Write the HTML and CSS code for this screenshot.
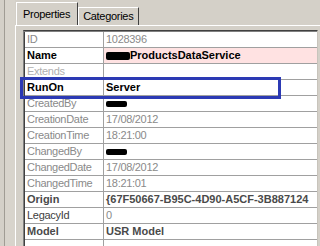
FILE: index.html
```html
<!DOCTYPE html>
<html lang="en">
<head>
    <meta charset="UTF-8">
    <title>Properties</title>
    <link rel="stylesheet" href="styles.css">
</head>
<body>
    <div class="window">
        <div class="side"></div>
        <div class="main">
            <div class="tabs">
                <div class="tab active">Properties</div>
                <div class="tab">Categories</div>
            </div>
            <div class="panel">
                <div class="grid">
                    <div class="row"><div class="key dim">ID</div><div class="val dim">1028396</div></div>
                    <div class="row"><div class="key bold">Name</div><div class="val bold pink"><span class="blob"></span>ProductsDataService</div></div>
                    <div class="row"><div class="key dim faint">Extends</div><div class="val"></div></div>
                    <div class="row run">
                        <div class="key bold">RunOn</div><div class="val bold">Server</div>
                        <div class="mark"></div>
                    </div>
                    <div class="row"><div class="key dim">CreatedBy</div><div class="val"><span class="blob short"></span></div></div>
                    <div class="row"><div class="key dim">CreationDate</div><div class="val dim">17/08/2012</div></div>
                    <div class="row"><div class="key dim">CreationTime</div><div class="val dim">18:21:00</div></div>
                    <div class="row"><div class="key dim">ChangedBy</div><div class="val"><span class="blob short"></span></div></div>
                    <div class="row"><div class="key dim">ChangedDate</div><div class="val dim">17/08/2012</div></div>
                    <div class="row"><div class="key dim">ChangedTime</div><div class="val dim">18:21:01</div></div>
                    <div class="row"><div class="key bold grey">Origin</div><div class="val bold grey">{67F50667-B95C-4D90-A5CF-3B887124</div></div>
                    <div class="row"><div class="key grey">LegacyId</div><div class="val dim">0</div></div>
                    <div class="row"><div class="key bold grey">Model</div><div class="val bold grey">USR Model</div></div>
                    <div class="row"><div class="key"></div><div class="val"></div></div>
                </div>
            </div>
        </div>
    </div>
</body>
</html>
```

FILE: styles.css
```css
body {
    margin: 0;
    font-family: "Liberation Sans", Arial, sans-serif;
    font-size: 11px;
    letter-spacing: -0.3px;
    background: #d4d0c8;
}
.window {
    display: flex;
    width: 320px;
    height: 246px;
    overflow: hidden;
    background: #d4d0c8;
}
.side {
    width: 10px;
    margin-left: 4px;
    border-left: 1px solid #a09c94;
    background: #d8d4cc;
}
.main {
    flex: 1;
    display: flex;
    flex-direction: column;
    min-height: 0;
}
.tabs {
    flex: none;
    display: flex;
    align-items: flex-end;
    height: 25px;
}
.tab {
    height: 18px;
    line-height: 17px;
    padding: 0 5px 0 4px;
    border-top: 1px solid #ffffff;
    border-left: 1px solid #ffffff;
    border-right: 1px solid #404040;
    color: #000000;
    box-sizing: border-box;
}
.tab.active {
    height: 23px;
    line-height: 22px;
    padding: 0 7px 0 6px;
    margin-left: 1px;
    background: #d4d0c8;
}
.panel {
    flex: 1;
    min-height: 0;
    overflow: hidden;
    border-top: 1px solid #ffffff;
    border-left: 1px solid #ffffff;
    padding: 4px 0 0 7px;
}
.grid {
    border-top: 1px solid #404040;
    border-left: 1px solid #808080;
    border-right: 1px solid #c8c4bc;
    box-shadow: inset 0 1px 0 #808080, inset 1px 0 0 #404040;
    background: #ffffff;
    padding: 1px 0 0 1px;
    width: 295px;
    height: 224px;
    box-sizing: border-box;
}
.row {
    display: flex;
    height: 16px;
    border-bottom: 1px solid #a0a0a0;
    box-sizing: border-box;
}
.run {
    position: relative;
}
.key {
    width: 76px;
    border-right: 1px solid #a0a0a0;
    padding-left: 2px;
    line-height: 15px;
    white-space: nowrap;
    overflow: hidden;
}
.val {
    flex: 1;
    padding-left: 2px;
    line-height: 15px;
    white-space: nowrap;
    overflow: hidden;
    display: flex;
    align-items: center;
}
.dim {
    color: #8a8a8a;
}
.faint {
    color: #b0b0b0;
}
.grey {
    color: #404040;
}
.bold {
    font-weight: bold;
    letter-spacing: 0;
    color: #000000;
}
.bold.grey {
    color: #4a4a4a;
}
.pink {
    background: #ffe2e2;
}
.blob {
    display: inline-block;
    width: 24px;
    height: 8px;
    background: #000000;
    border-radius: 2px;
}
.blob.short {
    width: 21px;
    height: 6px;
}
.mark {
    position: absolute;
    left: -5px;
    top: -3px;
    width: 261px;
    height: 22px;
    border: 3px solid #2c3ab4;
    box-sizing: border-box;
}
```
